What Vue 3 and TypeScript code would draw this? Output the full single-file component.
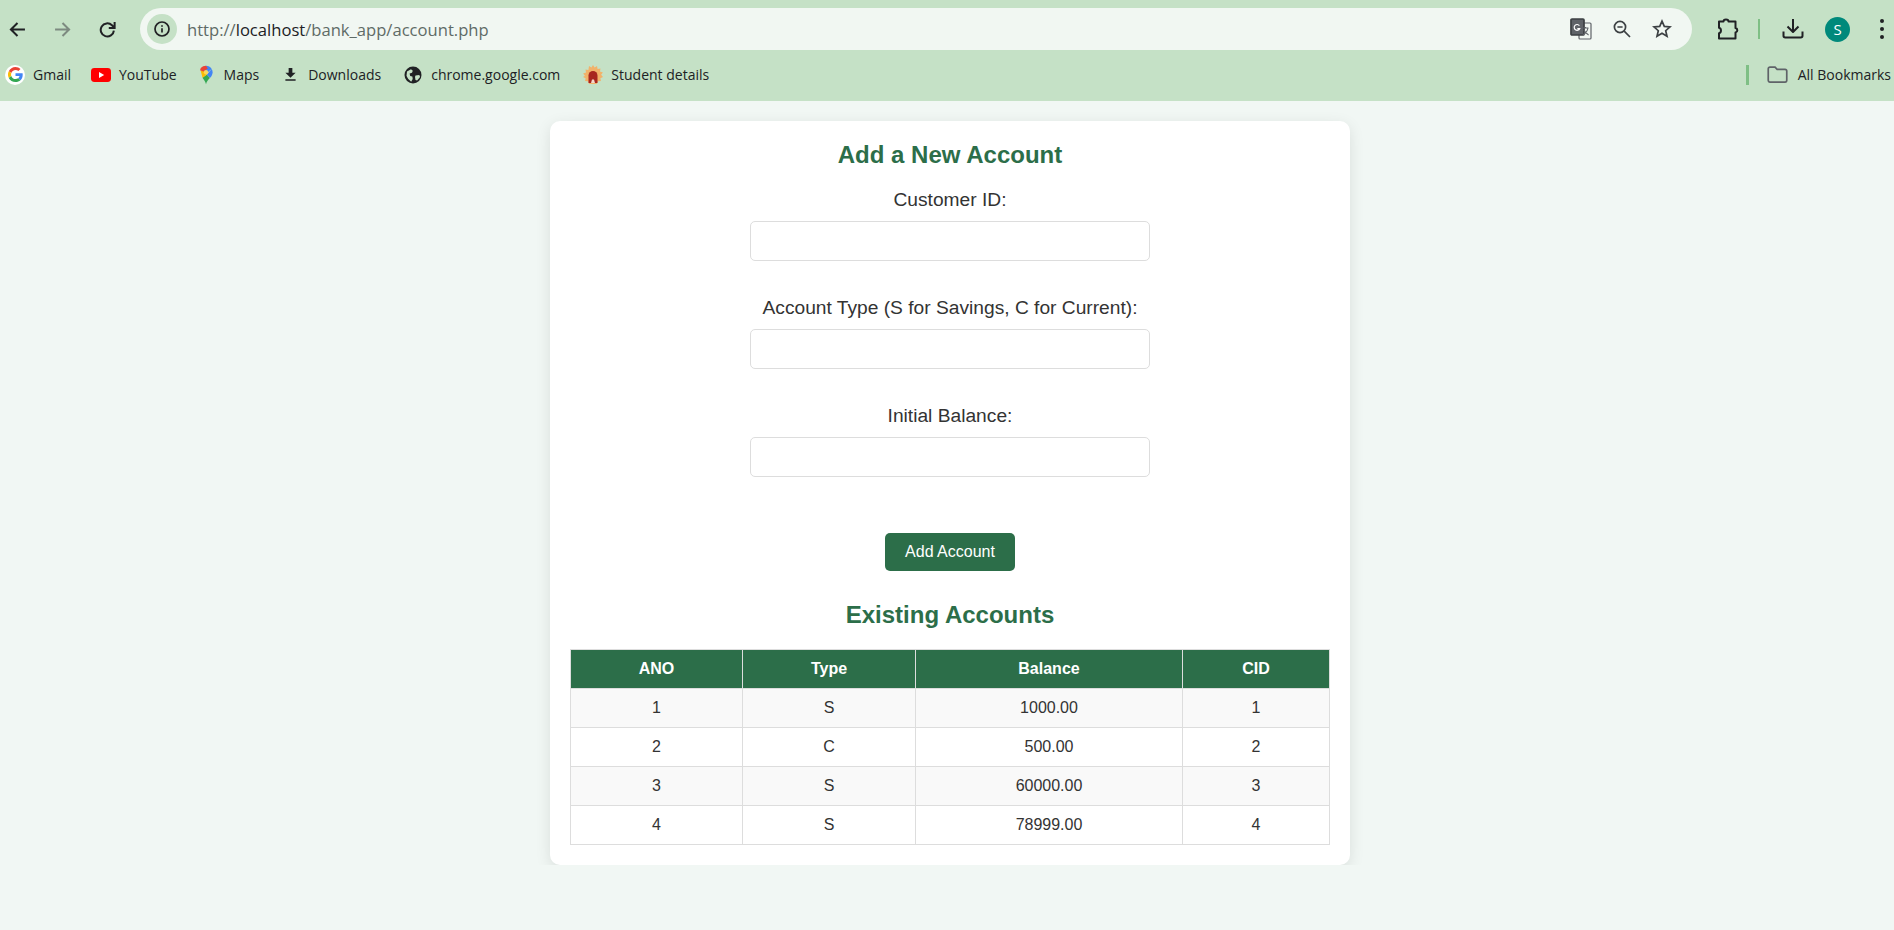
<template>
  <div class="browser">
    <div class="toolbar">
      <svg class="nav back" viewBox="0 0 16 16"><path d="M15 8H1.800M8 1.800 1.800 8 8 14.200" /></svg>
      <svg class="nav fwd" viewBox="0 0 16 16"><path d="M1 8h13.200M8 1.800 14.200 8 8 14.200" /></svg>
      <svg class="nav reload" viewBox="0 0 16 16"><path d="M14 9a6.200 6.200 0 1 1-1.800-5L14.500 6.300M14.700 1v5.500H9.200" /></svg>
      <div class="omnibox">
        <span class="site-info">
          <svg viewBox="0 0 16 16"><circle cx="8" cy="8" r="7" /><path d="M8 7.200v4.300M8 4.200v1.600" /></svg>
        </span>
        <span class="url">http://<b>localhost</b>/bank_app/account.php</span>
        <svg class="omni-icon translate" viewBox="0 0 22 22">
          <rect x="9" y="5" width="12" height="16" rx="1" fill="#f1f7f2" stroke="#5f6368" stroke-width="1.200" />
          <rect x="1" y="1" width="13" height="16" rx="1" fill="#5f6368" />
          <path d="M9.400 7.600A2.900 2.900 0 1 0 9.700 10.700H7.300" fill="none" stroke="#fff" stroke-width="1.200" />
          <path d="M12.500 10h6M15.500 9v1M18 10c-.6 3-2.400 5.400-5 7M14 12c.8 2 2.400 3.800 4.600 5" fill="none" stroke="#5f6368" stroke-width="1.100" />
        </svg>
        <svg class="omni-icon" viewBox="0 0 20 20"><circle cx="8" cy="8" r="5.600" /><path d="M5.400 8h5.200M12.200 12.200 18 18" /></svg>
        <svg class="omni-icon" viewBox="0 0 20 20"><path d="m10 2.200 2.300 5.200 5.700.5-4.300 3.800 1.300 5.600-5-3-5 3 1.300-5.600L2 7.900l5.700-.5z" /></svg>
      </div>
      <svg class="tool puzzle" viewBox="0 0 24 24"><path d="M3 4.500h4.500a2.500 2 0 0 1 5 0h7v6.500a2.300 2.300 0 0 1 0 4.500v6H3v-5.300c2.600-.5 2.600-5 0-5.500z" /></svg>
      <span class="sep"></span>
      <svg class="tool dl" viewBox="0 0 24 24"><path d="M12 2v13M6.500 9.500 12 15l5.500-5.500M2.500 14.500v4.300a1.700 1.700 0 0 0 1.700 1.700h15.600a1.700 1.700 0 0 0 1.700-1.700v-4.300" /></svg>
      <span class="avatar">S</span>
      <span class="kebab"><i></i><i></i><i></i></span>
    </div>
    <div class="bookmarks">
      <a class="bm">
        <span class="g-badge">
          <svg viewBox="0 0 48 48">
            <path fill="#ea4335" d="M24 9.500c3.500 0 6.700 1.300 9.200 3.500l6.800-6.800C35.800 2.400 30.300 0 24 0 14.600 0 6.500 5.400 2.600 13.200l8 6.200C12.400 13.700 17.700 9.500 24 9.500z" />
            <path fill="#4285f4" d="M47 24.500c0-1.600-.1-3.100-.4-4.500H24v9h12.900c-.6 3-2.200 5.500-4.700 7.200l7.700 6C44.400 38 47 31.800 47 24.500z" />
            <path fill="#fbbc05" d="M10.600 28.600a14.500 14.500 0 0 1 0-9.200l-8-6.200a24 24 0 0 0 0 21.600z" />
            <path fill="#34a853" d="M24 48c6.500 0 11.900-2.100 15.900-5.800l-7.700-6c-2.200 1.500-5 2.300-8.200 2.300-6.300 0-11.600-4.200-13.400-10l-8 6.300C6.500 42.600 14.600 48 24 48z" />
          </svg>
        </span>
        Gmail
      </a>
      <a class="bm">
        <svg class="fav yt" viewBox="0 0 20 14"><rect width="20" height="14" rx="3.400" fill="#f00" /><path d="m8 4 5.200 3L8 10z" fill="#fff" /></svg>
        YouTube
      </a>
      <a class="bm">
        <svg class="fav maps" viewBox="0 0 16 21">
          <path fill="#34a853" d="M8 21c-.6-3-2-4.700-4-7.500l5-3.500 3.500 4C10.500 16 8.800 18 8 21z" />
          <path fill="#fbbc05" d="M1.800 5 4 13.500 9 10 5 6z" />
          <path fill="#4285f4" d="M8 0c2.600 0 5 1.300 6.500 3.500L8 9 5 5.500z" />
          <path fill="#ea4335" d="M2 2.600A8 8 0 0 1 8 0l2 3-5 3.500L1.200 5z" />
          <path fill="#4285f4" d="M14.500 3.500C16.600 7 15.400 10.800 12.500 14L9 10z" />
          <circle cx="8" cy="7.400" r="2.500" fill="#fbd75b" />
        </svg>
        Maps
      </a>
      <a class="bm">
        <svg class="fav dl-small" viewBox="0 0 14 16"><path d="M5 1h4v5h3.500L7 11.500 1.500 6H5zM1.500 13h11v1.800h-11z" fill="#202124" /></svg>
        Downloads
      </a>
      <a class="bm">
        <svg class="fav globe" viewBox="0 0 18 18">
          <circle cx="9" cy="9" r="8.500" fill="#202124" />
          <path fill="#c5e1c6" d="M3 5.500 7 3.200l1.800 1.600-.8 2-2.400.7.600 2.500 2.200.5.300 2.500-1.500 2.700C5 14 3.200 12 2.500 9.800zM11.500 9.500l3.800-.5.800 2-3 3.500-1.600-.5-.5-3z" />
        </svg>
        chrome.google.com
      </a>
      <a class="bm">
        <svg class="fav sun" viewBox="0 0 20 20">
          <path fill="#f2b26a" d="m10 0 1.600 2.600L14 1l.6 2.900 2.900-.4-.5 2.900 2.900 1-1.800 2.300L20 12l-2.600 1.300.5 2.700-3 .3-1 2.700H6.100l-1-2.700-3-.3.5-2.700L0 12l1.900-1.300L.1 8.400l2.900-1-.5-2.900 2.900.4L6 1l2.400 1.600z" />
          <path fill="#a8261f" d="M5.500 18v-7.500a4.500 4.500 0 0 1 9 0V18z" />
          <path fill="#f3d9c8" d="M9 14.500h2l1 3.500H8z" />
        </svg>
        Student details
      </a>
      <span class="spacer"></span>
      <span class="bm-sep"></span>
      <a class="bm all">
        <svg class="folder" viewBox="0 0 22 18"><path d="M1.200 3a1.800 1.800 0 0 1 1.800-1.800h5.400l2.200 2.300H19a1.800 1.800 0 0 1 1.800 1.800v9.900a1.800 1.800 0 0 1-1.800 1.800H3a1.800 1.800 0 0 1-1.800-1.800z" /></svg>
        All Bookmarks
      </a>
    </div>
  </div>

  <main class="page">
    <section class="card">
      <h2>Add a New Account</h2>
      <form class="form" @submit.prevent>
        <div v-for="f in fields" :key="f" class="field">
          <label>{{ f }}</label>
          <input type="text" />
        </div>
        <button type="submit">Add Account</button>
      </form>
      <h2 class="existing">Existing Accounts</h2>
      <table>
        <colgroup>
          <col class="c-ano" />
          <col class="c-type" />
          <col class="c-bal" />
          <col />
        </colgroup>
        <thead>
          <tr><th>ANO</th><th>Type</th><th>Balance</th><th>CID</th></tr>
        </thead>
        <tbody>
          <tr v-for="a in accounts" :key="a.ano">
            <td>{{ a.ano }}</td>
            <td>{{ a.type }}</td>
            <td>{{ a.balance }}</td>
            <td>{{ a.cid }}</td>
          </tr>
        </tbody>
      </table>
    </section>
  </main>
</template>

<script setup lang="ts">
interface Account {
  ano: number
  type: string
  balance: string
  cid: number
}

const fields: string[] = [
  'Customer ID:',
  'Account Type (S for Savings, C for Current):',
  'Initial Balance:',
]

const accounts: Account[] = [
  { ano: 1, type: 'S', balance: '1000.00', cid: 1 },
  { ano: 2, type: 'C', balance: '500.00', cid: 2 },
  { ano: 3, type: 'S', balance: '60000.00', cid: 3 },
  { ano: 4, type: 'S', balance: '78999.00', cid: 4 },
]
</script>

<style>
html, body { margin: 0; background: #f1f7f4; }
</style>

<style scoped>
.browser { height: 101px; background: #c5e1c6; font-family: "Open Sans", "Noto Sans", sans-serif; color: #202124; overflow: hidden; }
.toolbar { height: 58px; display: flex; align-items: center; box-sizing: border-box; padding: 0 0 0 9px; }
.nav { width: 17px; height: 17px; fill: none; stroke: #202124; stroke-width: 1.900; flex: none; }
.fwd { margin-left: 28px; stroke: #7d8a80; }
.reload { margin-left: 28px; }
.omnibox { margin-left: 24px; width: 1552px; height: 42px; border-radius: 21px; background: #f1f7f2; display: flex; align-items: center; flex: none; box-sizing: border-box; padding: 0 20px 0 7px; }
.site-info { width: 30px; height: 30px; border-radius: 50%; background: #c5e1c6; display: flex; align-items: center; justify-content: center; flex: none; }
.site-info svg { width: 16px; height: 16px; fill: none; stroke: #202124; stroke-width: 1.700; }
.url { margin-left: 10px; font-size: 16.600px; color: #5f6b66; flex: 1; white-space: nowrap; }
.url b { font-weight: 400; color: #202124; }
.omni-icon { width: 20px; height: 20px; margin-left: 20px; fill: none; stroke: #3c4043; stroke-width: 1.700; flex: none; }
.translate { width: 22px; height: 22px; }
.tool { width: 24px; height: 24px; fill: none; stroke: #202124; stroke-width: 2; stroke-linejoin: round; flex: none; }
.puzzle { margin-left: 24px; }
.sep { width: 2px; height: 20px; background: #7fbf85; margin-left: 18px; flex: none; }
.dl { margin-left: 21px; }
.avatar { width: 25px; height: 25px; border-radius: 50%; background: #00897b; color: #fff; font-size: 15px; display: flex; align-items: center; justify-content: center; margin-left: 20px; flex: none; }
.kebab { display: flex; flex-direction: column; gap: 4px; margin-left: 30px; flex: none; }
.kebab i { width: 4px; height: 4px; border-radius: 50%; background: #202124; }

.bookmarks { height: 43px; display: flex; align-items: center; box-sizing: border-box; padding: 0 3px 10px 5px; font-size: 14px; }
.bm { display: flex; align-items: center; white-space: nowrap; margin-right: 20px; }
.g-badge { width: 20px; height: 20px; border-radius: 50%; background: #fff; display: flex; align-items: center; justify-content: center; margin-right: 8px; }
.g-badge svg { width: 15px; height: 15px; }
.fav { flex: none; margin-right: 8px; }
.yt { width: 20px; height: 14px; }
.maps { width: 14px; height: 20px; margin-left: 2px; margin-right: 11px; }
.dl-small { width: 13px; height: 15px; margin-left: 5px; margin-right: 11px; }
.globe { width: 18px; height: 18px; margin-left: 3px; margin-right: 9px; }
.sun { width: 20px; height: 20px; margin-left: 3px; }
.spacer { flex: 1; }
.bm-sep { width: 3px; height: 20px; background: #7fbf85; margin-right: 18px; }
.all { margin-right: 0; }
.folder { width: 21px; height: 17px; margin-right: 10px; fill: none; stroke: #5f6368; stroke-width: 1.800; }

.page { display: flex; justify-content: center; padding: 20px 0 0 6px; font-family: "Liberation Sans", Arial, sans-serif; color: #333; }
.card { width: 800px; height: 744px; box-sizing: border-box; padding: 20px; background: #fff; border-radius: 10px; box-shadow: 0 4px 15px rgba(0, 0, 0, .1); }
h2 { margin: 0 0 20px; font-size: 24px; line-height: 27px; font-weight: 700; color: #2c6e49; text-align: center; }
.form { display: flex; flex-direction: column; align-items: center; }
.field { display: flex; flex-direction: column; align-items: center; margin-bottom: 35px; }
.field:last-of-type { margin-bottom: 56px; }
label { font-size: 19.200px; padding-top: 1px; margin-bottom: 11px; line-height: 21px; }
input { width: 400px; height: 40px; box-sizing: border-box; padding: 10px; border: 1px solid #ddd; border-radius: 5px; background: #fff; }
button { width: 130px; height: 38px; border: none; border-radius: 5px; background: #2c6e49; color: #fff; font: 16px "Liberation Sans", Arial, sans-serif; }
.existing { margin: 30px 0 21px; }
table { width: 760px; border-collapse: collapse; table-layout: fixed; font-size: 16px; }
.c-ano { width: 172px; }
.c-type { width: 173px; }
.c-bal { width: 267px; }
th, td { height: 39px; padding: 0 10px; border: 1px solid #ddd; text-align: center; box-sizing: border-box; }
th { background: #2c6e49; color: #fff; font-weight: 700; }
tbody tr:nth-child(odd) { background: #f9f9f9; }
</style>
